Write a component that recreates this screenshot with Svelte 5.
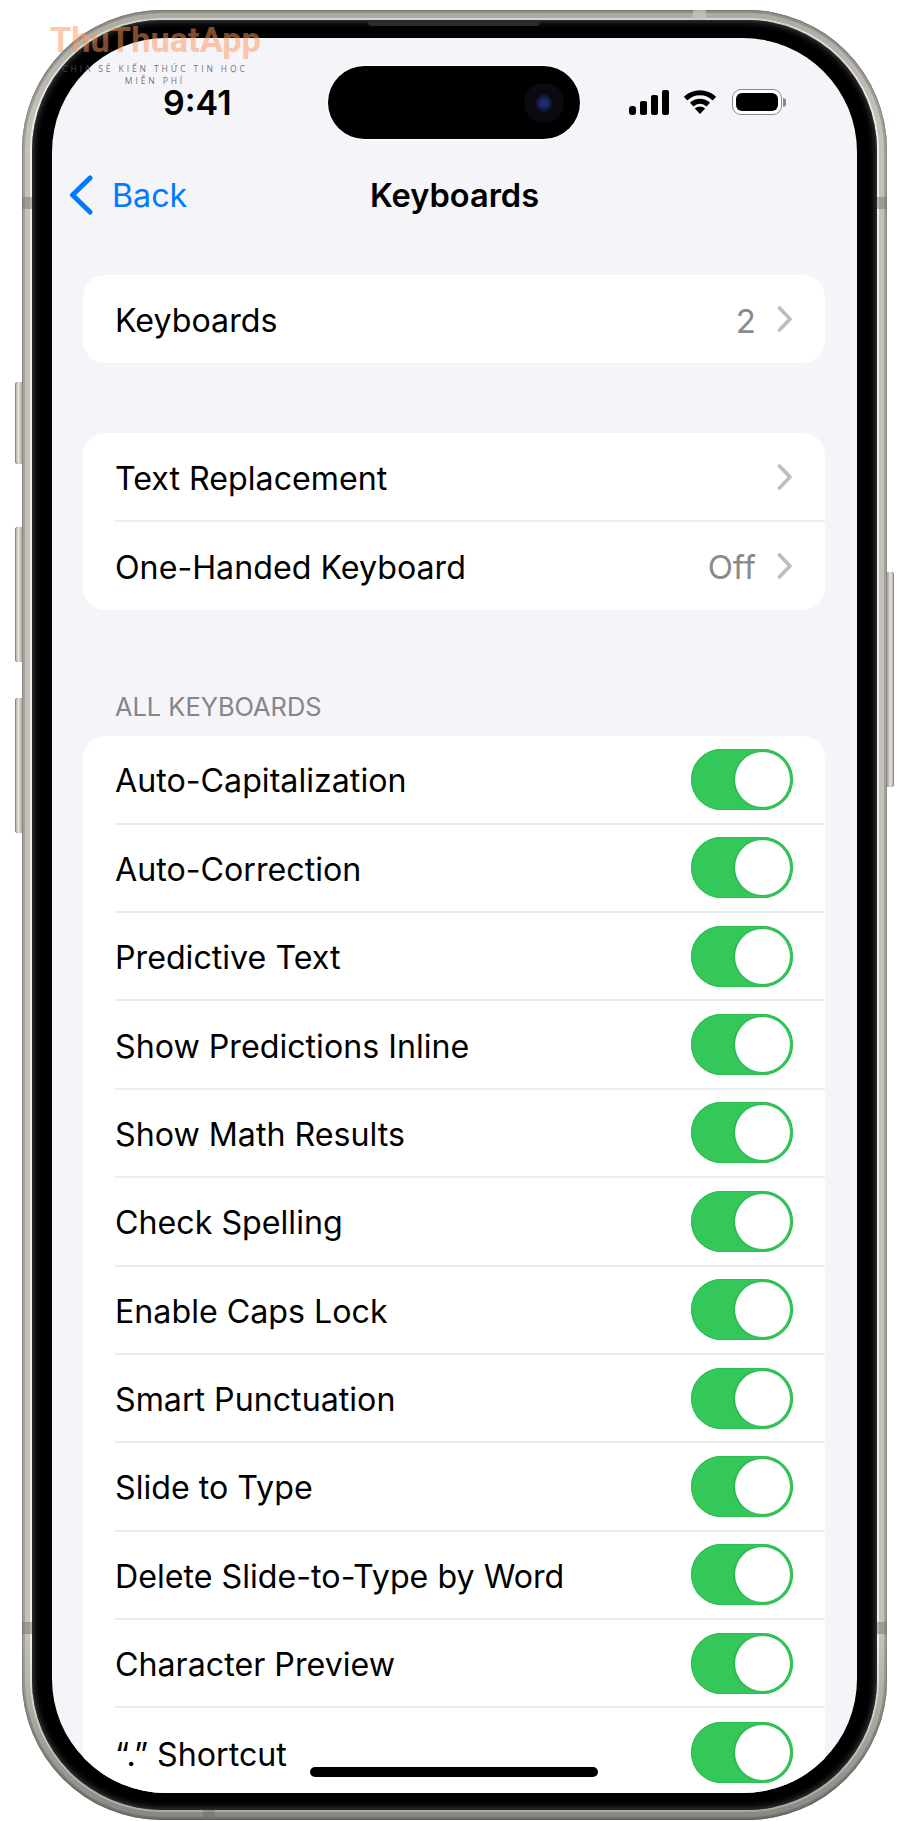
<script>
  const toggles = [
    "Auto-Capitalization",
    "Auto-Correction",
    "Predictive Text",
    "Show Predictions Inline",
    "Show Math Results",
    "Check Spelling",
    "Enable Caps Lock",
    "Smart Punctuation",
    "Slide to Type",
    "Delete Slide-to-Type by Word",
    "Character Preview",
    "“.” Shortcut"
  ];
</script>

{#snippet chevron()}
  <svg class="chevron" width="16" height="28" viewBox="0 0 16 28">
    <path d="M2.5 3 L13 14 L2.5 25" />
  </svg>
{/snippet}

<div class="stage">
  <div class="buttons-left">
    <div class="side action"></div>
    <div class="side volume"></div>
    <div class="side volume"></div>
  </div>

  <div class="rim">
    <span class="band band-top"></span>
    <span class="band band-bottom"></span>
    <span class="band band-l1"></span>
    <span class="band band-l2"></span>
    <span class="band band-r1"></span>
    <span class="band band-r2"></span>

    <div class="bezel">
      <span class="speaker"></span>
      <div class="screen">
        <div class="status">
          <span class="time">9:41</span>
          <div class="island">
            <span class="camera"><span class="lens"></span></span>
          </div>
          <div class="status-icons">
            <div class="signal">
              <span class="bar b1"></span>
              <span class="bar b2"></span>
              <span class="bar b3"></span>
              <span class="bar b4"></span>
            </div>
            <svg class="wifi" width="34" height="26" viewBox="0 0 34 26">
              <path class="arc" d="M2.6 9.6 A20.5 20.5 0 0 1 31.4 9.6" />
              <path class="arc" d="M8.7 15.6 A12 12 0 0 1 25.3 15.6" />
              <path class="dot" d="M11.8 19.6 A7.4 7.4 0 0 1 22.2 19.6 L17 25 Z" />
            </svg>
            <div class="battery"><span class="charge"></span></div>
            <span class="nub"></span>
          </div>
        </div>

        <div class="nav">
          <div class="back">
            <svg width="24" height="40" viewBox="0 0 24 40">
              <path d="M21 3 L3.5 20 L21 37" />
            </svg>
            <span>Back</span>
          </div>
          <div class="title">Keyboards</div>
          <div></div>
        </div>

        <div class="card first">
          <div class="row">
            <span class="label">Keyboards</span>
            <span class="value">2</span>
            {@render chevron()}
          </div>
        </div>

        <div class="card second">
          <div class="row ruled">
            <span class="label">Text Replacement</span>
            {@render chevron()}
          </div>
          <div class="row">
            <span class="label">One-Handed Keyboard</span>
            <span class="value">Off</span>
            {@render chevron()}
          </div>
        </div>

        <div class="section">ALL KEYBOARDS</div>

        <div class="card">
          {#each toggles as name, i}
            <div class="row" class:ruled={i < toggles.length - 1}>
              <span class="label">{name}</span>
              <span class="toggle"><span class="knob"></span></span>
            </div>
          {/each}
        </div>

        <div class="home"></div>
      </div>
    </div>
  </div>

  <div class="buttons-right">
    <div class="side power"></div>
  </div>

  <div class="watermark">
    <div class="brand">ThuThuatApp</div>
    <div class="slogan">CHIA SẺ KIẾN THỨC TIN HỌC</div>
    <div class="slogan">MIỄN PHÍ</div>
  </div>
</div>

<style>
  :global(body) {
    margin: 0;
    background: #fff;
  }

  .stage {
    position: relative;
    display: flex;
    align-items: flex-start;
    width: 900px;
    height: 1821px;
    padding: 10px 6px 0 15px;
    box-sizing: border-box;
    overflow: hidden;
    font-family: Inter, "Liberation Sans", sans-serif;
    color: #000;
  }

  /* hardware buttons */
  .buttons-left {
    display: flex;
    flex-direction: column;
    width: 7px;
    padding-top: 372px;
  }
  .buttons-right {
    width: 7px;
    padding-top: 562px;
  }
  .side {
    background: linear-gradient(90deg, #a3a19b, #e6e4de 50%, #a9a7a0);
  }
  .buttons-left .side {
    border-radius: 3px 0 0 3px;
    box-shadow: inset 1px 0 0 #8a8882;
  }
  .buttons-right .side {
    border-radius: 0 3px 3px 0;
    box-shadow: inset -1px 0 0 #8a8882;
  }
  .action {
    height: 82px;
    margin-bottom: 63px;
  }
  .volume {
    height: 135px;
    margin-bottom: 36px;
  }
  .power {
    height: 215px;
  }

  /* titanium frame */
  .rim {
    position: relative;
    width: 865px;
    height: 1810px;
    flex: none;
    padding: 10px;
    box-sizing: border-box;
    border-radius: 140px;
    background: #efede6;
    box-shadow:
      inset 0 0 0 1px #8a8780,
      inset 0 0 0 3px #a3a19a,
      inset 0 0 0 8px #c3c1b9;
  }
  /* the metal falls off into shadow towards the lower edge */
  .rim::before {
    content: "";
    position: absolute;
    inset: 0;
    border-radius: inherit;
    background: linear-gradient(180deg, rgba(0, 0, 0, 0.12), transparent 6%, transparent 90%, rgba(0, 0, 0, 0.3));
  }
  .band {
    position: absolute;
    background: rgba(110, 108, 102, 0.45);
  }
  .band-top {
    top: 0;
    left: 671px;
    width: 13px;
    height: 10px;
    background: rgba(200, 198, 190, 0.7);
  }
  .band-bottom {
    bottom: 0;
    left: 181px;
    width: 12px;
    height: 10px;
  }
  .band-l1,
  .band-l2,
  .band-r1,
  .band-r2 {
    width: 10px;
    height: 12px;
  }
  .band-l1 {
    left: 0;
    top: 187px;
  }
  .band-l2 {
    left: 0;
    top: 1612px;
  }
  .band-r1 {
    right: 0;
    top: 187px;
  }
  .band-r2 {
    right: 0;
    top: 1612px;
  }

  .bezel {
    position: relative;
    height: 100%;
    padding: 18px 20px 17px;
    box-sizing: border-box;
    border-radius: 130px;
    background: #000;
    box-shadow: inset 0 0 7px 1px #4a4a4a;
  }
  .speaker {
    position: absolute;
    top: 1px;
    left: 336px;
    width: 172px;
    height: 5px;
    border-radius: 0 0 4px 4px;
    background: #2b2b2b;
  }
  .screen {
    position: relative;
    height: 100%;
    overflow: hidden;
    border-radius: 114px;
    background: #f4f4f9;
  }

  /* status bar */
  .status {
    display: flex;
    align-items: center;
    height: 73px;
    margin-top: 28px;
    padding-left: 111px;
  }
  .time {
    width: 165px;
    font-size: 34px;
    font-weight: 600;
    line-height: 1;
  }
  .island {
    position: relative;
    width: 252px;
    height: 73px;
    border-radius: 37px;
    background: #000;
    box-shadow: 0 0 2px 1px #fff;
  }
  .camera {
    position: absolute;
    top: 17px;
    right: 16px;
    width: 40px;
    height: 40px;
    border-radius: 50%;
    background: #0b0a10;
    display: flex;
    align-items: center;
    justify-content: center;
  }
  .lens {
    width: 16px;
    height: 18px;
    border-radius: 50%;
    background: radial-gradient(circle, #1b2f66 0 25%, #12143c 60%, #0b0b20);
  }
  .status-icons {
    display: flex;
    align-items: center;
    margin-left: 49px;
    margin-top: -1px;
    height: 27px;
  }
  .signal {
    display: flex;
    align-items: flex-end;
    gap: 4px;
    height: 25px;
  }
  .bar {
    width: 7px;
    border-radius: 2px;
    background: #000;
  }
  .b1 {
    height: 9px;
    border-radius: 3px;
  }
  .b2 {
    height: 14px;
  }
  .b3 {
    height: 20px;
  }
  .b4 {
    height: 25px;
  }
  .wifi {
    margin-left: 14px;
  }
  .arc {
    fill: none;
    stroke: #000;
    stroke-width: 5;
  }
  .dot {
    fill: #000;
  }
  .battery {
    width: 50px;
    height: 26px;
    margin-left: 15px;
    padding: 3px;
    box-sizing: border-box;
    border: 1.5px solid #8a8a8c;
    border-radius: 9px;
    background: #fff;
  }
  .charge {
    display: block;
    height: 100%;
    border-radius: 6px;
    background: #000;
  }
  .nub {
    width: 3px;
    height: 9px;
    margin-left: 1px;
    border-radius: 0 3px 3px 0;
    background: #8a8a8c;
  }

  /* navigation */
  .nav {
    display: grid;
    grid-template-columns: 1fr auto 1fr;
    align-items: center;
    height: 112px;
    margin-bottom: 24px;
  }
  .back {
    display: flex;
    align-items: center;
    gap: 19px;
    padding-left: 17px;
    color: #007aff;
    font-size: 32.2px;
  }
  .back svg path {
    fill: none;
    stroke: #007aff;
    stroke-width: 5;
    stroke-linecap: round;
    stroke-linejoin: round;
  }
  .title {
    font-size: 32.6px;
    font-weight: 600;
  }

  /* grouped lists */
  .card {
    margin: 0 32px 0 31px;
    padding-left: 32px;
    border-radius: 22px;
    background: #fff;
  }
  .first {
    margin-bottom: 70px;
  }
  .second {
    margin-bottom: 78px;
  }
  .section {
    height: 48px;
    padding-left: 63px;
    font-size: 25.4px;
    line-height: 38px;
    color: #85858b;
  }
  .row {
    display: flex;
    align-items: center;
    height: 88.4px;
    padding-right: 32px;
    box-sizing: border-box;
  }
  .ruled {
    border-bottom: 2px solid #ececee;
  }
  .label {
    flex: 1;
    padding-top: 3px;
    font-size: 32.2px;
    white-space: nowrap;
  }
  .value {
    padding-top: 3px;
    font-size: 33px;
    color: #8a8a8e;
    margin-right: 21px;
  }
  .chevron {
    flex: none;
  }
  .chevron path {
    fill: none;
    stroke: #bcbcc1;
    stroke-width: 3.6;
    stroke-linecap: round;
    stroke-linejoin: round;
  }

  .toggle {
    display: flex;
    justify-content: flex-end;
    align-items: center;
    flex: none;
    width: 102px;
    height: 61px;
    padding: 3px;
    box-sizing: border-box;
    border-radius: 31px;
    background: #34c759;
    box-shadow: inset 0 0 0 1px #2cbf50;
  }
  .knob {
    width: 55px;
    height: 55px;
    border-radius: 50%;
    background: #fff;
    box-shadow: -1px 0 2px rgba(20, 110, 45, 0.35);
  }

  .home {
    position: absolute;
    bottom: 16px;
    left: 258px;
    width: 288px;
    height: 10px;
    border-radius: 5px;
    background: #000;
  }

  /* site watermark laid over the picture */
  .watermark {
    position: absolute;
    top: 20px;
    left: 50px;
    width: 207px;
    padding-bottom: 1px;
    text-align: center;
  }
  .brand {
    margin-bottom: 3px;
    font-family: Roboto, sans-serif;
    font-size: 34.4px;
    font-weight: 700;
    line-height: 40px;
    color: rgba(255, 150, 90, 0.5);
    white-space: nowrap;
  }
  .slogan {
    margin-left: 3px;
    font-family: "Open Sans", sans-serif;
    font-size: 8.5px;
    letter-spacing: 2.9px;
    line-height: 12px;
    color: rgba(85, 85, 100, 0.85);
    white-space: nowrap;
  }
</style>
